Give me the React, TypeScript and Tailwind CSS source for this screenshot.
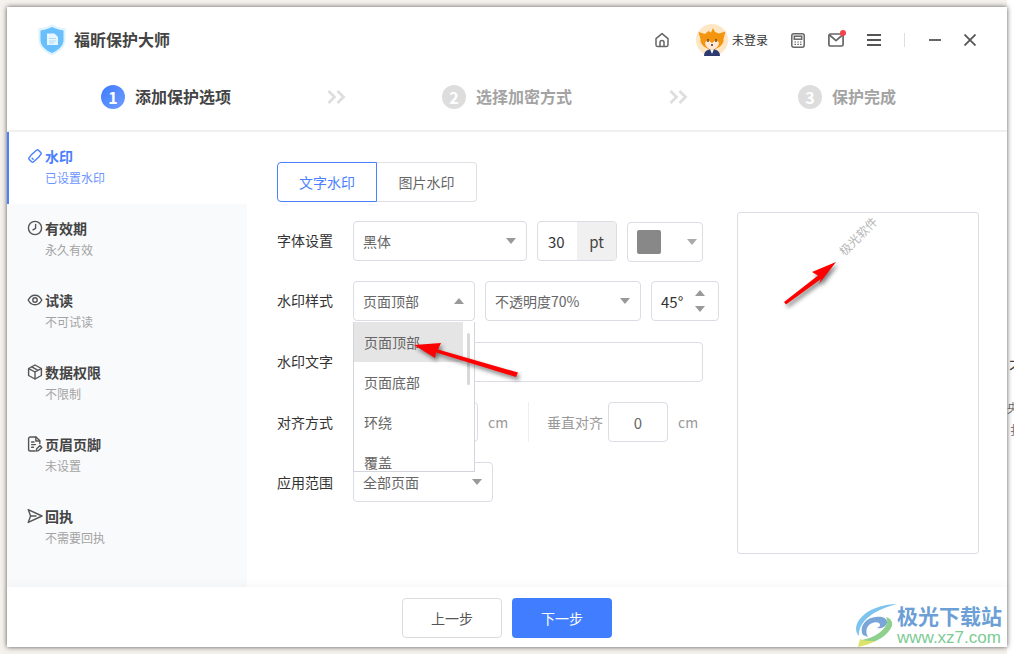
import React from "react";

const Caret = ({ up = false, c = "border-t-[#999]" }: { up?: boolean; c?: string }) => (
  <span
    className={
      up
        ? "h-0 w-0 border-x-[5px] border-b-[6px] border-x-transparent border-b-[#999]"
        : `h-0 w-0 border-x-[5px] border-t-[6px] border-x-transparent ${c}`
    }
  />
);

const Shield = () => (
  <svg width="28" height="32" viewBox="0 0 28 32" className="shrink-0">
    <path d="M14 0.5 C18 3 22 4 27.5 4.5 V16 C27.5 23 21 28.5 14 31.5 C7 28.5 0.5 23 0.5 16 V4.5 C6 4 10 3 14 0.5Z" fill="#def2ff" />
    <path d="M14 3 C18 5 21.5 6 25.5 6.5 V16 C25.5 22 20 26.5 14 29 C8 26.5 2.5 22 2.5 16 V6.5 C6.5 6 10 5 14 3Z" fill="#68bffb" />
    <path d="M9 9.5 H16.5 L20 13 V21 H9Z" fill="#e8f6ff" />
    <path d="M11 14.5H18M11 17H18M11 19H16" stroke="#a9dcfd" strokeWidth="1" />
  </svg>
);

const Fox = () => (
  <svg width="32" height="32" viewBox="0 0 32 32" className="shrink-0">
    <circle cx="16" cy="16" r="16" fill="#fde6c4" />
    <path d="M8 32 C8 27 12 25 16 25 C20 25 24 27 24 32Z" fill="#2c3a70" />
    <path d="M14 25 L16 30 L18 25Z" fill="#fff" />
    <path d="M2.5 8 L9 10 L12.5 7 L15 8.5 L17 4 L19 8 L23 9.5 L29.5 7.5 L27.5 15 C28.5 20 22 25.5 16 25.5 C10 25.5 3.5 20 4.5 15Z" fill="#f4950f" />
    <path d="M9 19 C10 16.5 12.5 15.5 14 17.5 L16 19 L18 17.5 C19.5 15.5 22 16.5 23 19 C22.5 22.5 19.5 25.5 16 25.5 C12.5 25.5 9.5 22.5 9 19Z" fill="#fde8da" />
    <path d="M12 15v3M20 15v3" stroke="#5a3a20" strokeWidth="1.3" />
    <circle cx="16" cy="21" r="1" fill="#50302a" />
  </svg>
);

const NavIcon = ({ children, blue = false }: { children: React.ReactNode; blue?: boolean }) => (
  <svg width="16" height="16" viewBox="0 0 16 16" fill="none" stroke={blue ? "#4a7fff" : "#555"} strokeWidth="1.4" strokeLinecap="round" strokeLinejoin="round" className="shrink-0">
    {children}
  </svg>
);

const items = [
  {
    t: "有效期",
    s: "永久有效",
    i: (
      <>
        <circle cx="8" cy="8" r="6.6" />
        <path d="M8.6 4.5V8.3L6 9.8" />
      </>
    ),
  },
  {
    t: "试读",
    s: "不可试读",
    i: (
      <>
        <path d="M1.2 8C3 4.6 5.3 3.2 8 3.2S13 4.6 14.8 8C13 11.4 10.7 12.8 8 12.8S3 11.4 1.2 8Z" />
        <circle cx="8" cy="8" r="2.2" />
      </>
    ),
  },
  {
    t: "数据权限",
    s: "不限制",
    i: (
      <>
        <path d="M8 1L14.4 4.5V11.5L8 15L1.6 11.5V4.5Z" />
        <path d="M1.8 4.7L8 8L14.2 4.7M8 8V14.8M4.8 2.9L11 6.3" />
      </>
    ),
  },
  {
    t: "页眉页脚",
    s: "未设置",
    i: (
      <>
        <path d="M8 15H3.4C2.4 15 1.6 14.2 1.6 13.2V2.8C1.6 1.8 2.4 1 3.4 1H9L12.8 4.8V7.5" />
        <path d="M8.8 1.2V5H12.6M4.6 6H7M4.6 8.6H8.5M4.6 11.2H6.5" />
        <path d="M9.3 15L9.7 12.8L13 9.6L14.8 11.4L11.5 14.6Z" />
      </>
    ),
  },
  {
    t: "回执",
    s: "不需要回执",
    i: (
      <>
        <path d="M1.2 1.6L15 8L1.2 14.4L3.6 8Z" />
        <path d="M3.6 8H9" />
      </>
    ),
  },
];

const Box = ({ className = "", children }: { className?: string; children?: React.ReactNode }) => (
  <div className={`flex h-10 items-center rounded-[4px] border border-[#dcdce4] bg-white ${className}`}>{children}</div>
);

const Row = ({ label, className = "", lift = false, children }: { label: string; className?: string; lift?: boolean; children: React.ReactNode }) => (
  <div className={`flex h-10 items-center ${className}`}>
    <span className={`w-[76px] shrink-0 text-[14px] text-[#333] ${lift ? "pb-[3px]" : ""}`}>{label}</span>
    {children}
  </div>
);

export default function App() {
  return (
    <div className="relative h-[654px] w-[1014px] overflow-hidden bg-[#f5f2ee] p-[7px] font-['Noto_Sans_CJK_SC','Noto_Sans',sans-serif] leading-none">
      {/* background window peeking out at the right */}
      <div className="absolute inset-y-0 right-0 w-[7px] bg-white text-[#444]">
        <span className="absolute left-[2px] top-[358px] text-[16px]">不</span>
        <span className="absolute left-0 top-[402px] text-[12px] text-[#777]">央</span>
        <span className="absolute left-[3px] top-[424px] text-[12px] text-[#777]">扌</span>
      </div>

      <div className="relative flex h-[640px] w-[1000px] flex-col bg-white shadow-[0_0_5px_rgba(0,0,0,0.65)]">
        {/* title bar */}
        <header className="flex h-[66px] shrink-0 items-center pl-[31px] pr-[31px]">
          <Shield />
          <span className="ml-[8px] pb-[2px] text-[16px] font-bold text-[#444]">福昕保护大师</span>
          <div className="ml-auto flex items-center">
            <svg width="16" height="16" viewBox="0 0 16 16" fill="none" stroke="#666" strokeWidth="1.5" strokeLinejoin="round">
              <path d="M2 6.6L8 1.6L14 6.6V13C14 13.9 13.4 14.4 12.6 14.4H3.4C2.6 14.4 2 13.9 2 13Z" />
              <path d="M6 14.2V10.4C6 9.3 6.9 8.6 8 8.6S10 9.3 10 10.4V14.2" />
            </svg>
            <span className="ml-[26px]"><Fox /></span>
            <span className="ml-[4px] w-[36px] text-[12px] text-[#333]">未登录</span>
            <svg className="ml-[23px]" width="14" height="15" viewBox="0 0 14 15" fill="none" stroke="#666" strokeWidth="1.5">
              <rect x="0.8" y="0.8" width="12.4" height="13.4" rx="2" />
              <rect x="3.3" y="3.2" width="7.4" height="3" />
              <path d="M3.5 9H5M6.3 9H7.8M9 9H10.5M3.5 11.4H5M6.3 11.4H7.8M9 11.4H10.5" strokeWidth="1.2" />
            </svg>
            <span className="relative ml-[23px] flex">
              <svg width="16" height="14" viewBox="0 0 16 14" fill="none" stroke="#666" strokeWidth="1.7" strokeLinejoin="round">
                <rect x="0.9" y="1" width="14.2" height="12" rx="1.5" />
                <path d="M1.5 2L8 7.6L14.5 2" />
              </svg>
              <span className="absolute -right-[2px] -top-[3px] h-[6px] w-[6px] rounded-full bg-[#f5424d]" />
            </span>
            <svg className="ml-[23px]" width="14" height="12" viewBox="0 0 14 12" stroke="#555" strokeWidth="2">
              <path d="M0 1H14M0 6H14M0 11H14" />
            </svg>
            <span className="ml-[23px] h-[14px] w-px bg-[#dfdfdf]" />
            <span className="ml-[24px] h-[2px] w-[12px] bg-[#666]" />
            <svg className="ml-[23px]" width="12" height="12" viewBox="0 0 12 12" stroke="#555" strokeWidth="1.8">
              <path d="M0.5 0.5L11.5 11.5M11.5 0.5L0.5 11.5" />
            </svg>
          </div>
        </header>

        {/* steps */}
        <div className="flex h-[57px] shrink-0 items-start pl-[94px] pt-[12px]">
          <span className="flex h-6 w-6 items-center justify-center rounded-full bg-[linear-gradient(135deg,#3f7bff,#6f9dff)] text-[16px] font-bold text-white">1</span>
          <span className="ml-[10px] text-[16px] font-bold leading-[22px] text-[#444]">添加保护选项</span>
          <svg className="ml-[96px] mt-[5px]" width="19" height="14" viewBox="0 0 19 14" fill="none" stroke="#dedede" strokeWidth="2.8">
            <path d="M1.5 1L7.5 7L1.5 13M10.5 1L16.5 7L10.5 13" />
          </svg>
          <span className="ml-[96px] flex h-6 w-6 items-center justify-center rounded-full bg-[#dddddd] text-[16px] font-bold text-white">2</span>
          <span className="ml-[10px] text-[16px] font-bold leading-[22px] text-[#a3a3a3]">选择加密方式</span>
          <svg className="ml-[97px] mt-[5px]" width="19" height="14" viewBox="0 0 19 14" fill="none" stroke="#dedede" strokeWidth="2.8">
            <path d="M1.5 1L7.5 7L1.5 13M10.5 1L16.5 7L10.5 13" />
          </svg>
          <span className="ml-[110px] flex h-6 w-6 items-center justify-center rounded-full bg-[#dddddd] text-[16px] font-bold text-white">3</span>
          <span className="ml-[10px] text-[16px] font-bold leading-[22px] text-[#a3a3a3]">保护完成</span>
        </div>

        {/* body */}
        <div className="flex min-h-0 flex-1 border-t-2 border-[#f0f0f0]">
          <aside className="w-[240px] shrink-0 bg-[#f9fafc]">
            <div className="h-[72px] border-l-2 border-[#4a7fff] bg-white pl-[18px] pt-[16px]">
              <div className="flex items-center gap-[2px]">
                <NavIcon blue>
                  <path d="M3.6 7.6L9.4 2.2C10 1.6 10.8 1.6 11.4 2.2L13.8 4.6C14.4 5.2 14.4 6 13.8 6.6L12.8 7.6" />
                  <path d="M12.4 8.4L6.6 13.8C6 14.4 5.2 14.4 4.6 13.8L2.2 11.4C1.6 10.8 1.6 10 2.2 9.4L3.2 8.4" />
                  <path d="M5.2 10.2L6.2 11.2" />
                </NavIcon>
                <span className="text-[14px] font-bold text-[#4a7fff]">水印</span>
              </div>
              <div className="mt-[8px] pl-[18px] text-[12px] text-[#6c95ff]">已设置水印</div>
            </div>
            {items.map((it) => (
              <div key={it.t} className="h-[72px] pl-[20px] pt-[16px]">
                <div className="flex items-center gap-[2px]">
                  <NavIcon>{it.i}</NavIcon>
                  <span className="text-[14px] font-bold text-[#444]">{it.t}</span>
                </div>
                <div className="mt-[8px] pl-[18px] text-[12px] text-[#a3a3a3]">{it.s}</div>
              </div>
            ))}
          </aside>

          <main className="flex min-w-0 flex-1 pl-[30px]">
            <div className="w-[460px] shrink-0 pt-[30px]">
              <div className="flex h-10">
                <div className="flex w-[100px] items-center justify-center rounded-l-[4px] border border-[#4a7fff] text-[14px] text-[#4a7fff]">文字水印</div>
                <div className="flex w-[100px] items-center justify-center rounded-r-[4px] border border-l-0 border-[#e0e0e6] text-[14px] text-[#666]">图片水印</div>
              </div>

              <Row label="字体设置" className="mt-[19px]" lift>
                <Box className="w-[174px] justify-between pl-[9px] pr-[10px] text-[14px] text-[#666]">
                  黑体
                  <Caret />
                </Box>
                <Box className="ml-[10px] w-[80px] overflow-hidden text-[15px] text-[#333]">
                  <span className="w-[39px] pl-[10px]">30</span>
                  <span className="flex h-full flex-1 items-center justify-center bg-[#f0f0f0] text-[#444]">pt</span>
                </Box>
                <Box className="ml-[10px] mt-[2px] w-[76px] justify-between pl-[9px] pr-[5px]">
                  <span className="h-6 w-6 rounded-[2px] bg-[#888]" />
                  <Caret c="border-t-[#aaa]" />
                </Box>
              </Row>

              <Row label="水印样式" className="mt-[20px]" lift>
                <div className="relative">
                  <Box className="w-[122px] justify-between border-[#4a7fff] pl-[9px] pr-[10px] text-[14px] text-[#666]">
                    页面顶部
                    <Caret up />
                  </Box>
                  <div className="absolute left-0 top-[41px] z-10 h-[150px] w-[122px] overflow-hidden border border-t-0 border-[#d4d4dc] bg-white text-[14px] text-[#666]">
                    <div className="flex h-10 w-[109px] items-center bg-[#e5e5e5] pl-[10px]">页面顶部</div>
                    <div className="flex h-10 items-center pl-[10px]">页面底部</div>
                    <div className="flex h-10 items-center pl-[10px]">环绕</div>
                    <div className="flex h-10 items-center pl-[10px]">覆盖</div>
                    <span className="absolute left-[113px] top-[11px] h-[52px] w-[3px] rounded-full bg-[#d8d8d8]" />
                  </div>
                </div>
                <Box className="ml-[10px] w-[156px] justify-between pl-[9px] pr-[10px] text-[14px] text-[#666]">
                  不透明度70%
                  <Caret />
                </Box>
                <Box className="ml-[10px] w-[68px] justify-between pl-[9px] pr-[13px] text-[15px] text-[#333]">
                  45°
                  <span className="flex flex-col gap-[10px]">
                    <Caret up />
                    <Caret />
                  </span>
                </Box>
              </Row>

              <Row label="水印文字" className="mt-[21px]" lift>
                <Box className="w-[350px]" />
              </Row>

              <Row label="对齐方式" className="mt-[20px]">
                <Box className="w-[125px]" />
                <span className="ml-[10px] w-[30px] text-[14px] text-[#999]">cm</span>
                <span className="ml-[10px] h-10 w-px bg-[#eeeeee]" />
                <span className="ml-[18px] w-[61px] text-[14px] text-[#999]">垂直对齐</span>
                <Box className="w-[60px] justify-center text-[15px] text-[#666]">0</Box>
                <span className="ml-[10px] text-[14px] text-[#999]">cm</span>
              </Row>

              <Row label="应用范围" className="mt-[20px]">
                <Box className="w-[140px] justify-between pl-[9px] pr-[10px] text-[14px] text-[#666]">
                  全部页面
                  <Caret />
                </Box>
              </Row>
            </div>

            <div className="relative mt-[80px] h-[342px] w-[242px] rounded-[3px] border border-[#dcdce4] bg-white">
              <span className="absolute left-[96px] top-[17px] -rotate-45 whitespace-nowrap text-[12px] text-[#b5b5b5]">极光软件</span>
            </div>
          </main>
        </div>

        {/* footer */}
        <footer className="relative z-0 flex h-[60px] shrink-0 items-start justify-center gap-[10px] bg-white pt-[11px] shadow-[0_-3px_8px_rgba(0,0,0,0.03)]">
          <button className="h-10 w-[100px] rounded-[4px] border border-[#dcdcdc] bg-white text-[14px] text-[#555]">上一步</button>
          <button className="h-10 w-[100px] rounded-[4px] bg-[#417dff] text-[14px] text-white">下一步</button>
        </footer>

        {/* site watermark */}
        <div className="absolute bottom-0 left-[848px] z-20 flex h-[44px] w-[152px] items-start">
          <svg width="42" height="44" viewBox="0 0 42 44" fill="none" className="shrink-0">
            <path d="M42 1 C28 1 12 6 4 17 C0 23 0 29 4 33 C3 25 9 16 19 10 C26 6 34 3 42 1Z" fill="#7cc4ee" />
            <path d="M8 32 C4 24 10 15 21 14 C28 13 33 16 32 20 C31 24 26 26 22 25 C25 24 26 22 24 20 C21 18 14 20 12 25 C11 28 11 31 13 34Z" fill="#7aa5d8" />
            <path d="M8 41 C20 40 32 34 37 23 C38 18 35 15 31 14 C34 19 31 25 24 30 C18 34 12 36 7 37Z" fill="#8fd08e" />
            <path d="M3 44 C8 43 15 41 21 38 C15 38 9 38 5 36Z" fill="#dbe36a" />
          </svg>
          <div className="flex flex-col">
            <span className="whitespace-nowrap text-[21px] font-bold leading-[24px] text-[#6c9fd6]">极光下载站</span>
            <span className="mt-[2px] whitespace-nowrap font-['Liberation_Sans',sans-serif] text-[17px] leading-[18px] text-[#7ccb94]">www.xz7.com</span>
          </div>
        </div>
      </div>

      {/* red annotation arrows */}
      <svg className="pointer-events-none absolute left-0 top-0 z-30 drop-shadow-[2px_3px_2px_rgba(0,0,0,0.5)]" width="1014" height="654" viewBox="0 0 1014 654">
        <path d="M414 345 L441 343 L438 349.5 L518 372.5 L516 377 L436 352.5 L435 358Z" fill="#f00" />
        <path d="M836 262 L812 272 L818 275.5 L784 302 L786 304.5 L821 279 L819 284Z" fill="#f00" />
      </svg>
    </div>
  );
}
